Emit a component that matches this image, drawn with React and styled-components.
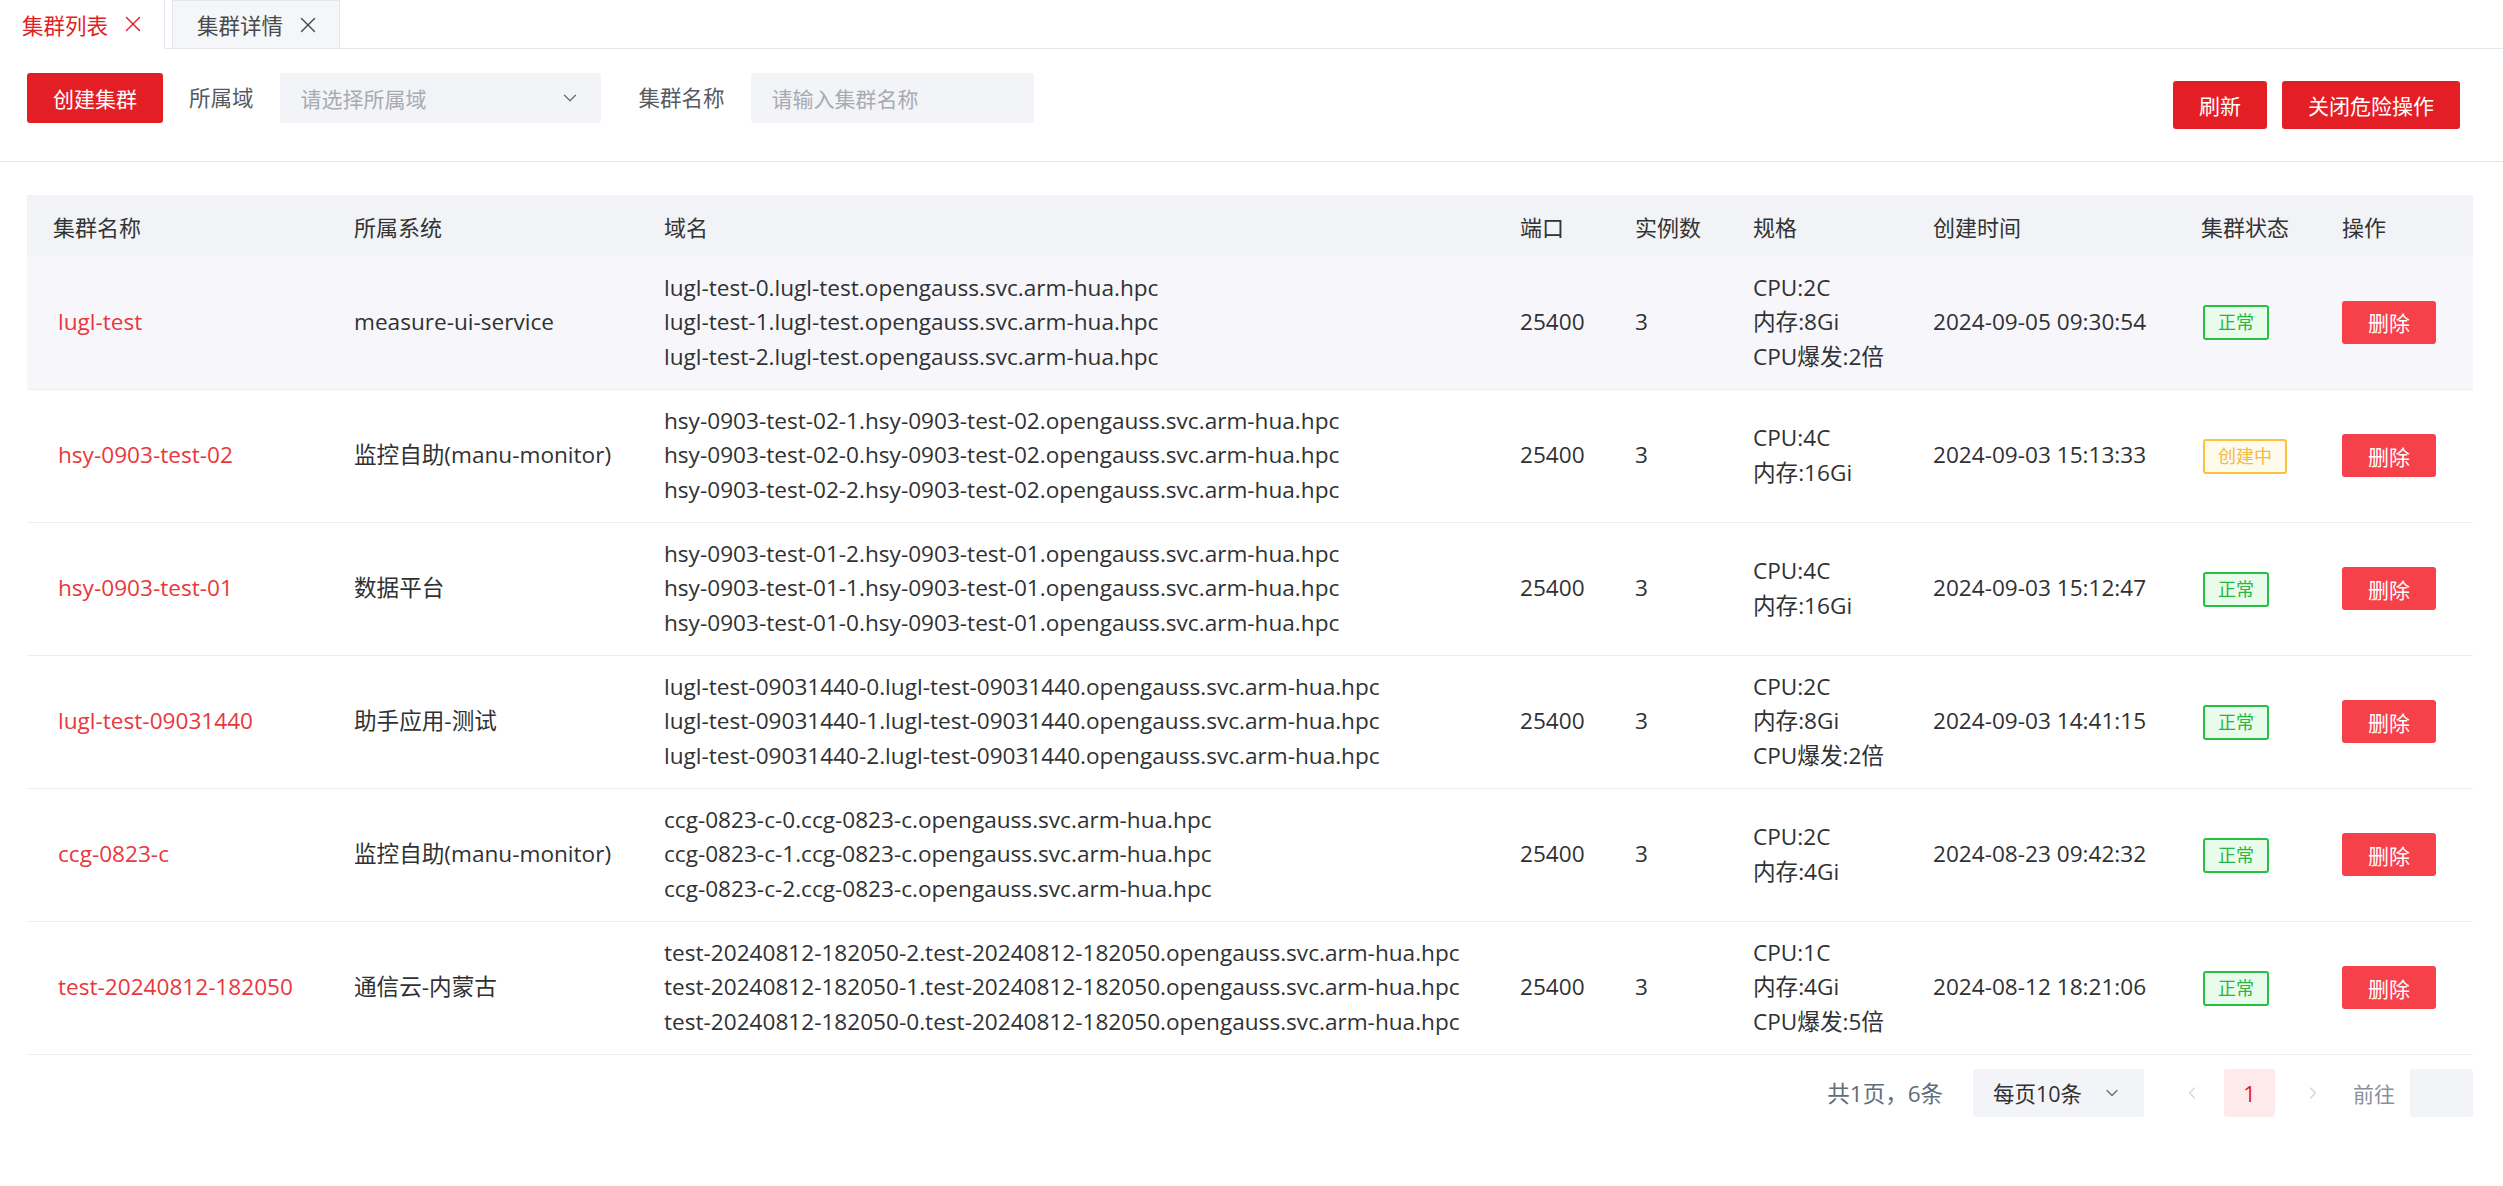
import React from "react";
import styled, { createGlobalStyle } from "styled-components";
import { X, ChevronDown, ChevronLeft, ChevronRight } from "lucide-react";

const GlobalStyle = createGlobalStyle`
  body {
    margin: 0;
    background: #fff;
    color: #303133;
    font-family: "Open Sans", "Noto Sans CJK SC", sans-serif;
  }
  * { box-sizing: border-box; }
`;

const RED = "#e31e24";

const TabBar = styled.div`
  display: flex;
  height: 49px;
  border-bottom: 1px solid #e4e7ed;
`;

const Tab = styled.div`
  display: flex;
  align-items: center;
  gap: 12px;
  height: 49px;
  margin-bottom: -1px;
  padding-left: ${(p) => (p.$active ? "22px" : "24px")};
  width: ${(p) => (p.$active ? "165px" : "168px")};
  margin-left: ${(p) => (p.$active ? "0" : "7px")};
  font-size: 21.5px;
  color: ${(p) => (p.$active ? RED : "#4a4a4a")};
  background: ${(p) => (p.$active ? "#fff" : "#f5f6fa")};
  border-right: 1px solid #e4e7ed;
  border-left: ${(p) => (p.$active ? "none" : "1px solid #e4e7ed")};
  border-top: ${(p) => (p.$active ? "none" : "1px solid #e4e7ed")};
  border-bottom: ${(p) => (p.$active ? "1px solid #fff" : "1px solid #e4e7ed")};
`;

const Toolbar = styled.div`
  display: flex;
  align-items: flex-start;
  height: 113px;
  padding: 24px 43px 0 27px;
  border-bottom: 1px solid #e4e7ed;
`;

const Button = styled.button`
  height: ${(p) => (p.$tall ? "50px" : "48px")};
  padding: 0 26px;
  border: none;
  border-radius: 3px;
  background: ${RED};
  color: #fff;
  font-family: inherit;
  font-size: 21px;
`;

const Label = styled.span`
  line-height: 50px;
  font-size: 21.5px;
  color: #555a62;
  margin: 0 26px 0 ${(p) => p.$ml || "26px"};
`;

const Field = styled.div`
  display: flex;
  align-items: center;
  justify-content: space-between;
  width: ${(p) => p.$w};
  height: 50px;
  padding: 0 20px 0 21px;
  background: #f3f4f8;
  border-radius: 3px;
  color: #a8abb2;
  font-size: 21px;
`;

const RightGroup = styled.div`
  display: flex;
  gap: 15px;
  margin-left: auto;
  margin-top: 8px;
`;

const TableWrap = styled.div`
  padding: 33px 30px 0 27px;
`;

const Table = styled.table`
  width: 2446px;
  border-collapse: collapse;
  table-layout: fixed;
  font-size: 22.6px;
`;

const HeadCell = styled.th`
  height: 61px;
  padding: 0 0 0 26px;
  text-align: left;
  font-size: 22px;
  font-weight: 400;
  color: #333;
  background: #f2f3f7;
`;

const Row = styled.tr`
  height: 133px;
  background: ${(p) => (p.$hover ? "#f7f7fb" : "#fff")};
  border-bottom: 1px solid #ebeef5;
`;

const Cell = styled.td`
  padding: 0 0 0 26px;
  line-height: 34.5px;
  vertical-align: middle;
  white-space: nowrap;
`;

const NameLink = styled.span`
  padding-left: 5px;
  color: #e8383d;
`;

const Tag = styled.span`
  display: inline-block;
  height: 35px;
  line-height: 31px;
  margin-left: 2px;
  padding: 0 13px;
  font-size: 18px;
  border-radius: 3px;
  border: 2px solid ${(p) => (p.$warn ? "#fbc23f" : "#27c043")};
  background: ${(p) => (p.$warn ? "#fffbec" : "#e9fbea")};
  color: ${(p) => (p.$warn ? "#f5b944" : "#27b544")};
`;

const DeleteButton = styled.button`
  width: 94px;
  height: 43px;
  border: none;
  border-radius: 3px;
  background: #f6404a;
  color: #fff;
  font-family: inherit;
  font-size: 21px;
`;

const Pager = styled.div`
  display: flex;
  align-items: center;
  justify-content: flex-end;
  height: 48px;
  margin-top: 14px;
  font-size: 21px;
`;

const Total = styled.span`
  font-size: 22.5px;
  color: #5e6d7a;
  margin-right: 30px;
`;

const SizeSelect = styled.div`
  display: flex;
  align-items: center;
  justify-content: space-between;
  width: 171px;
  height: 48px;
  padding: 0 22px 0 20px;
  background: #f3f4f8;
  border-radius: 3px;
  color: #303133;
  font-size: 21.5px;
`;

const Arrow = styled.span`
  display: flex;
  color: #d4d6dc;
  margin: ${(p) => p.$m};
`;

const PageNum = styled.div`
  width: 51px;
  height: 48px;
  display: flex;
  align-items: center;
  justify-content: center;
  background: #feeaea;
  border-radius: 3px;
  color: #e31e24;
  font-size: 22px;
`;

const Goto = styled.span`
  color: #8a8f99;
  margin-right: 15px;
`;

const GotoInput = styled.div`
  width: 63px;
  height: 48px;
  background: #f3f4f8;
  border-radius: 3px;
`;

const columns = [
  ["集群名称", 301],
  ["所属系统", 310],
  ["域名", 856],
  ["端口", 115],
  ["实例数", 118],
  ["规格", 180],
  ["创建时间", 268],
  ["集群状态", 141],
  ["操作", 157],
];

const dom = (name, ids) => ids.map((i) => `${name}-${i}.${name}.opengauss.svc.arm-hua.hpc`);

const rows = [
  { name: "lugl-test", sys: "measure-ui-service", domains: dom("lugl-test", [0, 1, 2]), spec: ["CPU:2C", "内存:8Gi", "CPU爆发:2倍"], time: "2024-09-05 09:30:54", hover: true },
  { name: "hsy-0903-test-02", sys: "监控自助(manu-monitor)", domains: dom("hsy-0903-test-02", [1, 0, 2]), spec: ["CPU:4C", "内存:16Gi"], time: "2024-09-03 15:13:33", creating: true },
  { name: "hsy-0903-test-01", sys: "数据平台", domains: dom("hsy-0903-test-01", [2, 1, 0]), spec: ["CPU:4C", "内存:16Gi"], time: "2024-09-03 15:12:47" },
  { name: "lugl-test-09031440", sys: "助手应用-测试", domains: dom("lugl-test-09031440", [0, 1, 2]), spec: ["CPU:2C", "内存:8Gi", "CPU爆发:2倍"], time: "2024-09-03 14:41:15" },
  { name: "ccg-0823-c", sys: "监控自助(manu-monitor)", domains: dom("ccg-0823-c", [0, 1, 2]), spec: ["CPU:2C", "内存:4Gi"], time: "2024-08-23 09:42:32" },
  { name: "test-20240812-182050", sys: "通信云-内蒙古", domains: dom("test-20240812-182050", [2, 1, 0]), spec: ["CPU:1C", "内存:4Gi", "CPU爆发:5倍"], time: "2024-08-12 18:21:06" },
];

const Lines = ({ items }) => items.map((t) => <div key={t}>{t}</div>);

export default function App() {
  return (
    <>
      <GlobalStyle />
      <TabBar>
        <Tab $active>
          集群列表 <X size={26} strokeWidth={1.3} />
        </Tab>
        <Tab>
          集群详情 <X size={26} strokeWidth={1.3} />
        </Tab>
      </TabBar>

      <Toolbar>
        <Button $tall>创建集群</Button>
        <Label>所属域</Label>
        <Field $w="321px">
          请选择所属域 <ChevronDown size={22} strokeWidth={1.5} color="#6b6f76" />
        </Field>
        <Label $ml="38px">集群名称</Label>
        <Field $w="283px">请输入集群名称</Field>
        <RightGroup>
          <Button>刷新</Button>
          <Button>关闭危险操作</Button>
        </RightGroup>
      </Toolbar>

      <TableWrap>
        <Table>
          <colgroup>
            {columns.map(([k, w]) => (
              <col key={k} style={{ width: w }} />
            ))}
          </colgroup>
          <thead>
            <tr>
              {columns.map(([k]) => (
                <HeadCell key={k}>{k}</HeadCell>
              ))}
            </tr>
          </thead>
          <tbody>
            {rows.map((r) => (
              <Row key={r.name} $hover={r.hover}>
                <Cell>
                  <NameLink>{r.name}</NameLink>
                </Cell>
                <Cell>{r.sys}</Cell>
                <Cell>
                  <Lines items={r.domains} />
                </Cell>
                <Cell>25400</Cell>
                <Cell>3</Cell>
                <Cell>
                  <Lines items={r.spec} />
                </Cell>
                <Cell>{r.time}</Cell>
                <Cell>
                  {r.creating ? <Tag $warn>创建中</Tag> : <Tag>正常</Tag>}
                </Cell>
                <Cell>
                  <DeleteButton>删除</DeleteButton>
                </Cell>
              </Row>
            ))}
          </tbody>
        </Table>
        <Pager>
          <Total>共1页，6条</Total>
          <SizeSelect>
            每页10条 <ChevronDown size={20} strokeWidth={1.5} color="#6b6f76" />
          </SizeSelect>
          <Arrow $m="0 22px 0 38px">
            <ChevronLeft size={20} strokeWidth={1.5} />
          </Arrow>
          <PageNum>1</PageNum>
          <Arrow $m="0 30px 0 28px">
            <ChevronRight size={20} strokeWidth={1.5} />
          </Arrow>
          <Goto>前往</Goto>
          <GotoInput />
        </Pager>
      </TableWrap>
    </>
  );
}
